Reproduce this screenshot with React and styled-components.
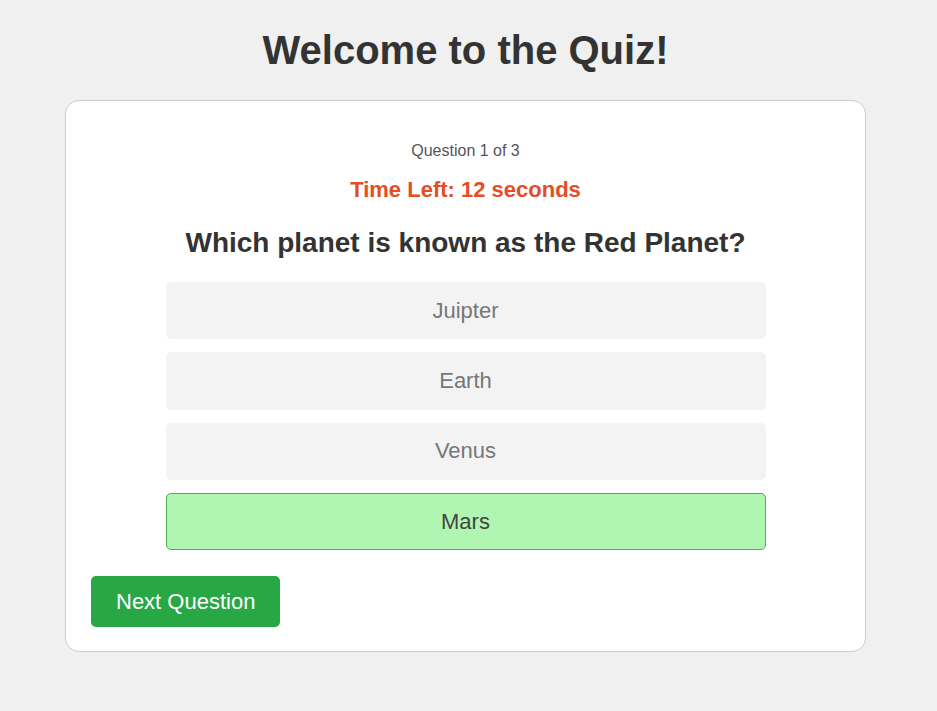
import React from "react";
import styled, { createGlobalStyle } from "styled-components";

const GlobalStyle = createGlobalStyle`
  body {
    margin: 0;
    background: #f0f0f0;
    font-family: "Liberation Sans", Arial, sans-serif;
    color: #333;
  }
`;

const options = ["Juipter", "Earth", "Venus", "Mars"];
const selected = "Mars";

const App = () => {
  return (
    <Page>
      <GlobalStyle />
      <Title>Welcome to the Quiz!</Title>
      <Card>
        <Counter>Question 1 of 3</Counter>
        <Timer>Time Left: 12 seconds</Timer>
        <Question>Which planet is known as the Red Planet?</Question>
        <OptionList>
          {options.map((opt) => (
            <Option key={opt} $correct={opt === selected}>
              {opt}
            </Option>
          ))}
        </OptionList>
        <NextBtn>Next Question</NextBtn>
      </Card>
    </Page>
  );
};

const Page = styled.div`
  padding: 0 6px 59px 0;
  display: flex;
  flex-direction: column;
  align-items: center;
`;

const Title = styled.h1`
  font-size: 40px;
  font-weight: bold;
  color: #333;
  margin: 27px 0 27px;
  line-height: 46px;
`;

const Card = styled.div`
  width: 801px;
  box-sizing: border-box;
  background: #fff;
  border: 1px solid #ccc;
  border-radius: 14px;
  padding: 25px 25px 24px;
  display: flex;
  flex-direction: column;
  align-items: center;
`;

const Counter = styled.p`
  margin: 16px 0 0;
  font-size: 16px;
  line-height: 18px;
  color: #555;
`;

const Timer = styled.p`
  margin: 17px 0 0;
  font-size: 22px;
  line-height: 25px;
  font-weight: bold;
  color: #e44d26;
`;

const Question = styled.h2`
  margin: 25px 0 23px;
  font-size: 28px;
  line-height: 32px;
  font-weight: bold;
  color: #333;
`;

const OptionList = styled.div`
  width: 600px;
  display: flex;
  flex-direction: column;
  gap: 13px;
`;

const Option = styled.button`
  height: 57.3px;
  box-sizing: border-box;
  border-radius: 5px;
  font-family: inherit;
  font-size: 22px;
  cursor: pointer;
  background: ${(p) => (p.$correct ? "#b0f5b1" : "#f3f3f3")};
  border: 1px solid ${(p) => (p.$correct ? "#4caf50" : "#f3f3f3")};
  color: ${(p) => (p.$correct ? "#444" : "#777")};
`;

const NextBtn = styled.button`
  align-self: flex-start;
  margin-top: 26px;
  height: 51px;
  padding: 0 25px;
  border: none;
  border-radius: 5px;
  background: #28a745;
  color: #fff;
  font-family: inherit;
  font-size: 22px;
  cursor: pointer;
`;

export default App;
